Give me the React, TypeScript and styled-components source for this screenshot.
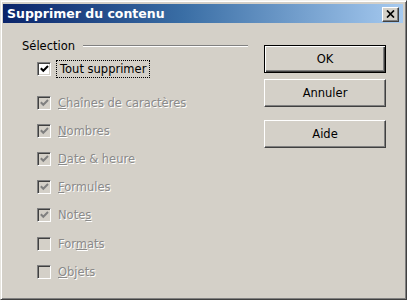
import React from "react";
import styled, { createGlobalStyle } from "styled-components";

const Global = createGlobalStyle`
  html, body { margin: 0; padding: 0; background: #ffffff; }
  body { width: 407px; height: 300px; overflow: hidden; }
`;

const Window = styled.div`
  box-sizing: border-box;
  width: 407px;
  height: 300px;
  background: #d4d0c8;
  border-top: 1px solid #f4f3ef;
  border-left: 1px solid #e6e4de;
  border-right: 1px solid #404040;
  border-bottom: 1px solid #404040;
  box-shadow: inset 1px 1px 0 #ffffff, inset -1px -1px 0 #808080;
  padding: 3px 3px 0 2px;
  display: flex;
  flex-direction: column;
  font-family: "DejaVu Sans", Tahoma, sans-serif;
  font-size: 11.5px;
  color: #000;
`;

const TitleBar = styled.div`
  height: 19px;
  background: linear-gradient(to right, #0a246a 0%, #3a6ea5 45%, #a6caf0 100%);
  display: flex;
  align-items: center;
  justify-content: space-between;
  padding: 0 4px 0 4px;
`;

const Title = styled.span`
  color: #ffffff;
  font-weight: bold;
  font-size: 12.5px;
`;

const CloseButton = styled.div`
  box-sizing: border-box;
  width: 17px;
  height: 15px;
  background: #d4d0c8;
  border-top: 1px solid #ffffff;
  border-left: 1px solid #ffffff;
  border-right: 1px solid #404040;
  border-bottom: 1px solid #404040;
  box-shadow: inset -1px -1px 0 #808080;
  display: flex;
  align-items: center;
  justify-content: center;
  margin-top: 1px;
`;

const Body = styled.div`
  flex: 1;
  display: flex;
  padding: 16px 17px 0 19px;
`;

const Group = styled.div`
  width: 226px;
  display: flex;
  flex-direction: column;
`;

const Legend = styled.div`
  display: flex;
  align-items: center;
  gap: 8px;
  height: 14px;
`;

const LegendLine = styled.div`
  flex: 1;
  height: 1px;
  background: #808080;
  border-bottom: 1px solid #ffffff;
`;

const List = styled.div`
  display: flex;
  flex-direction: column;
  padding-left: 15px;
  margin-top: 2px;
`;

const Row = styled.div<{ $gap?: number }>`
  height: 28px;
  margin-top: ${(p) => p.$gap ?? 0}px;
  display: flex;
  align-items: center;
`;

const Box = styled.div<{ $disabled?: boolean }>`
  box-sizing: border-box;
  width: 14px;
  height: 14px;
  background: ${(p) => (p.$disabled ? "#d4d0c8" : "#ffffff")};
  border-top: 1px solid #808080;
  border-left: 1px solid #808080;
  border-right: 1px solid #ffffff;
  border-bottom: 1px solid #ffffff;
  box-shadow: inset 1px 1px 0 #404040, inset -1px -1px 0 #d4d0c8;
  display: flex;
  align-items: center;
  justify-content: center;
  flex-shrink: 0;
`;

const Label = styled.span<{ $disabled?: boolean; $focus?: boolean }>`
  margin-left: ${(p) => (p.$focus ? "6px" : "7px")};
  padding: ${(p) => (p.$focus ? "1px 3px 1px 3px" : "0")};
  outline: ${(p) => (p.$focus ? "1px dotted #000" : "none")};
  color: ${(p) => (p.$disabled ? "#8a8a8a" : "#000")};
  text-shadow: ${(p) => (p.$disabled ? "1px 1px 0 #ffffff" : "none")};
  white-space: nowrap;
  u { text-decoration: underline; }
`;

const Buttons = styled.div`
  margin-left: auto;
  display: flex;
  flex-direction: column;
  width: 122px;
  padding-top: 6px;
`;

const Button = styled.div<{ $default?: boolean; $gap: number }>`
  box-sizing: border-box;
  height: 28px;
  margin-top: ${(p) => p.$gap}px;
  background: #d4d0c8;
  display: flex;
  align-items: center;
  justify-content: center;
  border: 1px solid transparent;
  border-top-color: ${(p) => (p.$default ? "#000" : "#ffffff")};
  border-left-color: ${(p) => (p.$default ? "#000" : "#ffffff")};
  border-right-color: ${(p) => (p.$default ? "#000" : "#404040")};
  border-bottom-color: ${(p) => (p.$default ? "#000" : "#404040")};
  box-shadow: ${(p) =>
    p.$default
      ? "inset 1px 1px 0 #ffffff, inset -1px -1px 0 #404040, inset -2px -2px 0 #808080"
      : "inset -1px -1px 0 #808080"};
`;

const Check = ({ color }: { color: string }) => (
  <svg width="9" height="8" viewBox="0 0 9 8">
    <path d="M0.8 3.2 L3.3 5.8 L8 1" stroke={color} strokeWidth="2" fill="none" />
  </svg>
);

const XIcon = () => (
  <svg width="9" height="8" viewBox="0 0 9 8">
    <path d="M1 0.5 L8 7.5 M8 0.5 L1 7.5" stroke="#000" strokeWidth="1.7" />
  </svg>
);

type Item = { label: React.ReactNode; checked: boolean; gap?: number };

const items: Item[] = [
  { label: <><u>C</u>haînes de caractères</>, checked: true, gap: 6 },
  { label: <><u>N</u>ombres</>, checked: true },
  { label: <><u>D</u>ate &amp; heure</>, checked: true },
  { label: <><u>F</u>ormules</>, checked: true },
  { label: <>Note<u>s</u></>, checked: true },
  { label: <>For<u>m</u>ats</>, checked: false, gap: 1 },
  { label: <><u>O</u>bjets</>, checked: false },
];

export default function App() {
  return (
    <>
      <Global />
      <Window>
        <TitleBar>
          <Title>Supprimer du contenu</Title>
          <CloseButton>
            <XIcon />
          </CloseButton>
        </TitleBar>
        <Body>
          <Group>
            <Legend>
              <span>Sélection</span>
              <LegendLine />
            </Legend>
            <List>
              <Row>
                <Box>
                  <Check color="#000" />
                </Box>
                <Label $focus>Tout supprimer</Label>
              </Row>
              {items.map((it, i) => (
                <Row key={i} $gap={it.gap}>
                  <Box $disabled>{it.checked && <Check color="#808080" />}</Box>
                  <Label $disabled>{it.label}</Label>
                </Row>
              ))}
            </List>
          </Group>
          <Buttons>
            <Button $default $gap={0}>OK</Button>
            <Button $gap={6}>Annuler</Button>
            <Button $gap={13}>Aide</Button>
          </Buttons>
        </Body>
      </Window>
    </>
  );
}
